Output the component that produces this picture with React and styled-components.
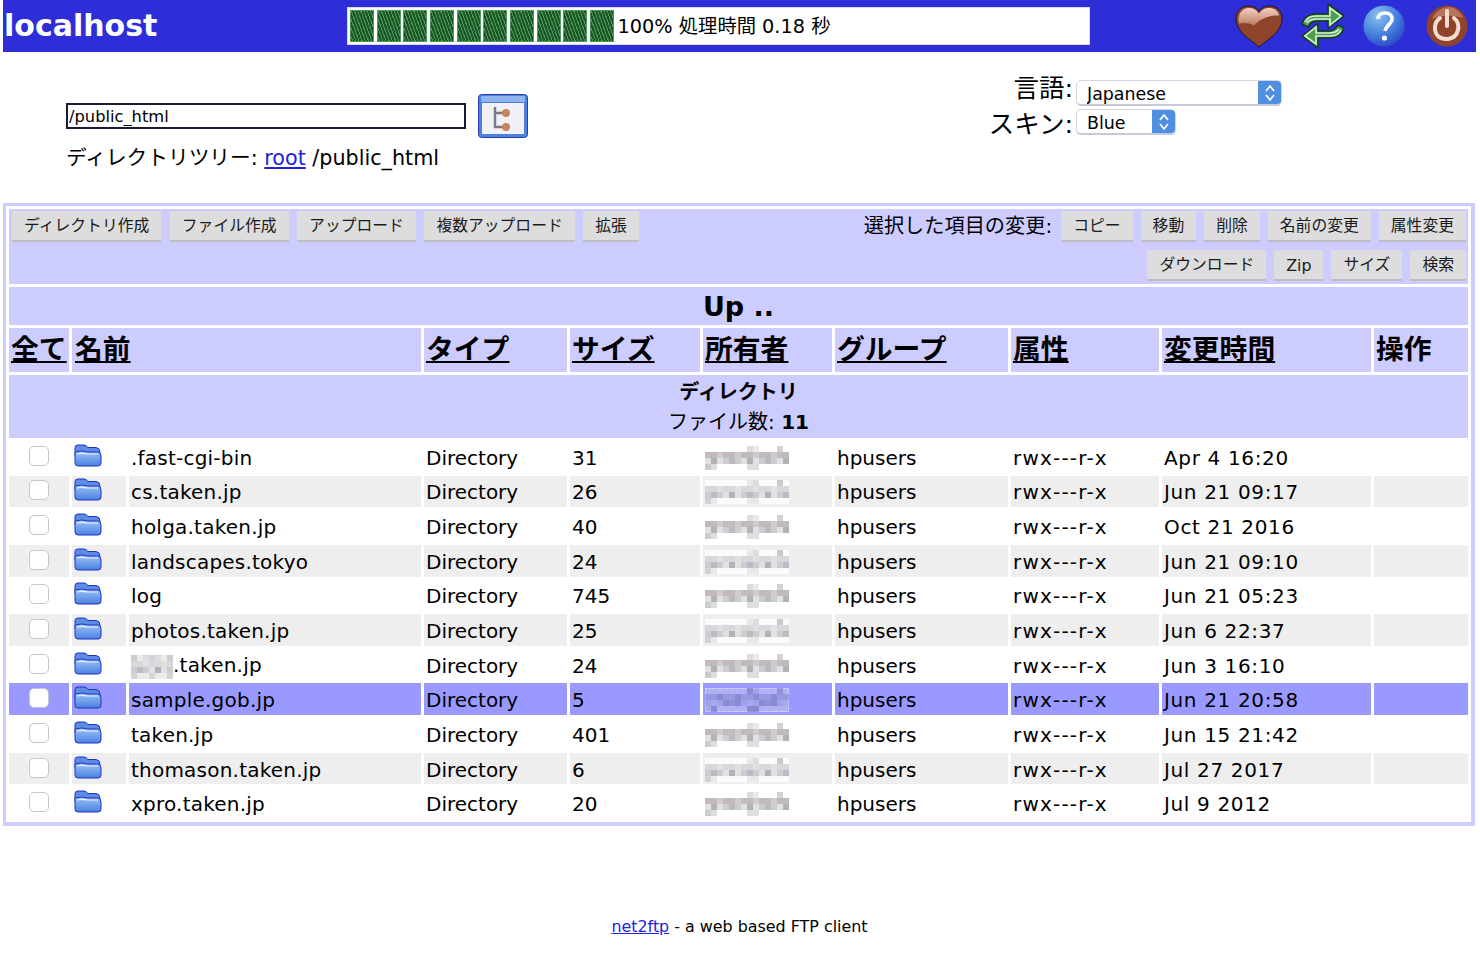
import React from "react";
import styled, { createGlobalStyle } from "styled-components";

const FONT = `"DejaVu Sans", "Noto Sans CJK JP", sans-serif`;

const GlobalStyle = createGlobalStyle`
	html, body {
		margin: 0;
		padding: 0;
		background: #ffffff;
		color: #000000;
		font-family: ${FONT};
	}
	a {
		color: #2222dd;
	}
`;

const Page = styled.div`
	width: 1480px;
	height: 954px;
	padding: 0 4px 0 3px;
	box-sizing: border-box;
	overflow: hidden;
`;

/* top bar */
const TopBar = styled.header`
	height: 52px;
	background: #2e2ed8;
	display: flex;
	align-items: center;
`;
const Title = styled.h1`
	margin: 0 0 0 1px;
	width: 343px;
	color: #ffffff;
	font-size: 30px;
	line-height: 52px;
	font-weight: bold;
`;
const Progress = styled.div`
	width: 743px;
	height: 38px;
	box-sizing: border-box;
	background: #ffffff;
	border: 1px solid #d8d8f4;
	padding: 2px;
	display: flex;
	align-items: center;
	gap: 2.67px;
	font-size: 19.3px;
`;
const Block = styled.span`
	width: 24px;
	height: 32px;
	box-sizing: border-box;
	border: 1px solid #4d9a5a;
	background: repeating-linear-gradient(70deg, #1c5428 0 1px, #4a9a58 1px 2px, #1c5428 2px 3px);
`;
const ProgressText = styled.span`
	margin-left: 1px;
	padding-bottom: 3px;
	white-space: nowrap;
`;
const TopIcons = styled.div`
	margin-left: auto;
	margin-right: 8px;
	display: flex;
	align-items: center;
	gap: 18px;
`;
const PowerSlot = styled.span`
	display: flex;
	margin-left: 3px;
`;

/* path + language */
const Controls = styled.section`
	height: 151px;
	display: flex;
	justify-content: space-between;
`;
const PathArea = styled.div`
	padding: 42px 0 0 63px;
`;
const PathRow = styled.div`
	display: flex;
	align-items: center;
	gap: 12px;
`;
const PathInput = styled.input`
	width: 400px;
	height: 26px;
	box-sizing: border-box;
	border: 2px solid #1a1a30;
	padding: 0 2px 0 1px;
	font: 16.3px ${FONT};
	color: #000000;
	background: #ffffff;
	outline: none;
`;
const TreeLine = styled.div`
	margin-top: 6px;
	font-size: 20.7px;
	line-height: 28px;
`;
const LangGrid = styled.div`
	margin: 28px 194px 0 0;
	display: grid;
	grid-template-columns: auto 206px;
	grid-auto-rows: 26px;
	column-gap: 3px;
	row-gap: 3px;
	align-items: center;
`;
const LangLabel = styled.label`
	font-size: 25.5px;
	line-height: 26px;
	text-align: right;
	margin-bottom: ${(p) => p.$lift || 0}px;
	margin-top: ${(p) => p.$drop || 0}px;
`;
const SelectBox = styled.div`
	width: ${(p) => p.$width}px;
	height: 26px;
	box-sizing: border-box;
	border: 1px solid #d4d4e4;
	border-bottom: 2px solid #c8c8dc;
	border-radius: 5px;
	background: #ffffff;
	display: flex;
	overflow: hidden;
`;
const NativeSelect = styled.select`
	appearance: none;
	flex: 1;
	min-width: 0;
	border: none;
	background: transparent;
	padding: 2px 0 0 10px;
	font: 17.4px ${FONT};
	color: #000000;
	outline: none;
`;
const SelectArrow = styled.span`
	width: 23px;
	background: #4f8fe0;
	display: flex;
	align-items: center;
	justify-content: center;
`;

/* main panel */
const Panel = styled.section`
	margin-right: 1px;
	border: 4px solid #ccccff;
	border-top-width: 3px;
	border-left-width: 3px;
`;
const Table = styled.table`
	width: 100%;
	table-layout: fixed;
	border-collapse: separate;
	border-spacing: 3px;
`;
const Cell = styled.td`
	padding: 2px 2px 0;
	box-sizing: border-box;
	height: 31.65px;
	font-size: 20px;
	line-height: 24px;
	letter-spacing: ${(p) => p.$spacing || 0}px;
	white-space: nowrap;
	background: ${(p) => (p.$selected ? "#9999ff" : p.$alt ? "#eeeeee" : "#ffffff")};
`;
const ToolbarCell = styled.td`
	height: 75px;
	padding: 2px 2px 2px 3px;
	box-sizing: border-box;
	background: #ccccff;
	vertical-align: top;
`;
const Toolbar = styled.div`
	display: flex;
	justify-content: space-between;
`;
const ButtonGroup = styled.div`
	display: flex;
	align-items: flex-start;
	gap: ${(p) => p.$gap || 8.5}px;
`;
const RightTools = styled.div`
	display: flex;
	flex-direction: column;
	align-items: flex-end;
	gap: 8px;
`;
const ToolLabel = styled.span`
	font-size: 20.2px;
	line-height: 30px;
	margin-right: 1px;
`;
const ToolButton = styled.button`
	height: 31px;
	box-sizing: border-box;
	padding: ${(p) => (p.$latin ? "2px 12px 0" : "0 12px 2px")};
	border: none;
	border-bottom: 2px solid #bdbdc4;
	background: #dddddd;
	color: #1a1a1a;
	font: 15.8px ${FONT};
	white-space: nowrap;
`;
const UpCell = styled.td`
	height: 38px;
	padding: 1px 0 0;
	box-sizing: border-box;
	background: #ccccff;
	text-align: center;
	font-size: 27px;
	font-weight: bold;
	line-height: 36px;
`;
const HeadCell = styled.th`
	height: 44px;
	padding: 0 2px;
	box-sizing: border-box;
	background: #ccccff;
	text-align: left;
	font-size: 27.8px;
	font-weight: bold;
	line-height: 36px;
	white-space: nowrap;
	text-decoration: ${(p) => (p.$plain ? "none" : "underline")};
`;
const HeadLabel = styled.span`
	margin-left: ${(p) => p.$indent || 0}px;
`;
const SectionCell = styled.td`
	height: 63px;
	padding: 0;
	background: #ccccff;
	text-align: center;
	font-size: 20px;
	line-height: 30px;
`;
const CheckBox = styled.input`
	appearance: none;
	display: block;
	width: 20px;
	height: 20px;
	margin: 0 auto 4px;
	box-sizing: border-box;
	background: #ffffff;
	border: 1.5px solid #c6c6ce;
	border-radius: 5px;
`;
const FolderWrap = styled.div`
	display: flex;
	padding: 0 0 5px 0;
`;
const MaskSlot = styled.span`
	display: inline-block;
	vertical-align: -7px;
`;
const MosaicSvg = styled.svg`
	display: block;
	flex-shrink: 0;
`;

/* footer */
const Footer = styled.footer`
	margin-top: 91px;
	text-align: center;
	font-size: 15.9px;
	line-height: 20px;
`;

const COLS = [60, 54, 292, 143, 130, 129, 173, 148, 209, 94];

const ROWS = [
	[".fast-cgi-bin", "31", "Apr 4 16:20"],
	["cs.taken.jp", "26", "Jun 21 09:17"],
	["holga.taken.jp", "40", "Oct 21 2016"],
	["landscapes.tokyo", "24", "Jun 21 09:10"],
	["log", "745", "Jun 21 05:23"],
	["photos.taken.jp", "25", "Jun 6 22:37"],
	[".taken.jp", "24", "Jun 3 16:10", true],
	["sample.gob.jp", "5", "Jun 21 20:58"],
	["taken.jp", "401", "Jun 15 21:42"],
	["thomason.taken.jp", "6", "Jul 27 2017"],
	["xpro.taken.jp", "20", "Jul 9 2012"],
];

const LEFT_BUTTONS = ["ディレクトリ作成", "ファイル作成", "アップロード", "複数アップロード", "拡張"];
const RIGHT_BUTTONS = ["コピー", "移動", "削除", "名前の変更", "属性変更"];
const RIGHT_BUTTONS_2 = ["ダウンロード", "Zip", "サイズ", "検索"];
const HEADS = [["全て", 1, false, 0], ["名前", 2, false, 1], ["タイプ", 1], ["サイズ", 1], ["所有者", 1], ["グループ", 1], ["属性", 1], ["変更時間", 1], ["操作", 1, true]];

const Heart = () => (
	<svg width="48" height="43" viewBox="0 0 50 44" preserveAspectRatio="none">
		<defs>
			<linearGradient id="heartTop" x1="0" y1="0" x2="0" y2="1">
				<stop offset="0" stopColor="#f4d0c4" />
				<stop offset="1" stopColor="#b87a60" />
			</linearGradient>
		</defs>
		<path d="M25 43 C17 36 1 28 1 14 C1 6 7 1 14 1 C19 1 23 3 25 7 C27 3 31 1 36 1 C43 1 49 6 49 14 C49 28 33 36 25 43 Z" fill="#8f432b" stroke="#1c1420" strokeWidth="1" />
		<path d="M4 19 C2 9 8 3 14 3 C19 3 23 5 25 9 C27 5 31 3 36 3 C41 3 45 6 46 11 C36 10 26 14 20 21 C14 18 9 18 4 19 Z" fill="url(#heartTop)" />
	</svg>
);

const Arrows = () => (
	<svg width="44" height="48" viewBox="0 0 44 48">
		<g fill="#4f9f52" stroke="#123a1c" strokeWidth="1.4">
			<path d="M1 22 C3 15 9 12 15 12 H27 V2 L43 14 L27 26 V19 H16 C12 19 9 21 7 25 Z" />
			<path d="M43 26 C41 33 35 36 29 36 H17 V46 L1 34 L17 22 V29 H28 C32 29 35 27 37 23 Z" />
		</g>
		<g fill="none" stroke="#d8f0d0" strokeWidth="1.6">
			<path d="M4 20 C6 16 10 14 15 14 H29 V6 L40 14 L29 23 V17 H16 C12 17 8 18 6 21" />
			<path d="M40 28 C38 32 34 34 29 34 H15 V42 L4 34 L15 25 V31 H28 C32 31 36 30 38 27" />
		</g>
	</svg>
);

const Help = () => (
	<svg width="42" height="42" viewBox="0 0 42 42">
		<defs>
			<radialGradient id="helpBall" cx="0.35" cy="0.25" r="0.85">
				<stop offset="0" stopColor="#8cc0f0" />
				<stop offset="0.5" stopColor="#4a86e0" />
				<stop offset="1" stopColor="#2740c0" />
			</radialGradient>
		</defs>
		<circle cx="21" cy="21" r="20.5" fill="url(#helpBall)" />
		<path d="M15 14 C15 10 18 8 22 8 C26 8 29 10 29 14 C29 19 23 20 22 26" fill="none" stroke="#ffffff" strokeWidth="3.6" />
		<circle cx="21.5" cy="33" r="2.6" fill="#ffffff" />
	</svg>
);

const Power = () => (
	<svg width="42" height="42" viewBox="0 0 42 42">
		<circle cx="21" cy="21" r="20.5" fill="#8f432b" />
		<path d="M6 14 C9 6 16 2 24 2 C30 3 35 7 37 13 C27 10 15 10 6 14 Z" fill="#c48a70" opacity="0.7" />
		<path d="M14 13 C8 17 7 27 13 32 C19 36 28 34 31 28 C34 22 32 16 28 13" fill="none" stroke="#f2dcd2" strokeWidth="4" strokeLinecap="round" />
		<path d="M21 6 V21" stroke="#f2dcd2" strokeWidth="4" strokeLinecap="round" />
	</svg>
);

const TreeIcon = () => (
	<svg width="50" height="44" viewBox="0 0 50 44">
		<rect x="0.5" y="0.5" width="49" height="43" rx="3" fill="#4f7fe0" stroke="#2a3cb8" />
		<rect x="3" y="2" width="44" height="6" fill="#8fb4f0" />
		<rect x="4" y="9" width="42" height="31" fill="#f0f0f6" />
		<path d="M17 13 V33 H26 M17 19 H26" fill="none" stroke="#7a7a8a" strokeWidth="2.4" />
		<circle cx="28" cy="19" r="4" fill="#c8845c" />
		<circle cx="28" cy="33" r="4" fill="#c8845c" />
	</svg>
);

const Chevrons = () => (
	<svg width="12" height="20" viewBox="0 0 12 20" fill="none" stroke="#ffffff" strokeWidth="1.7">
		<path d="M2 8 L6 3 L10 8" />
		<path d="M2 12 L6 17 L10 12" />
	</svg>
);

const Folder = () => (
	<svg width="28" height="23" viewBox="0 0 28 23">
		<defs>
			<linearGradient id="folderFill" x1="0" y1="0" x2="0" y2="1">
				<stop offset="0" stopColor="#9cc4f4" />
				<stop offset="1" stopColor="#4a80e4" />
			</linearGradient>
		</defs>
		<path d="M1 7 V3.5 Q1 1 4 1 H10 Q12 1 14 3.5 H22 Q26 4 26 8 V12 H1 Z" fill="#5c8ce6" stroke="#2032c0" />
		<path d="M1 8 Q8 6 14 8 H24 Q27 8.5 27 12 V19 Q27 22 24 22 H4 Q1 22 1 19 Z" fill="url(#folderFill)" stroke="#2032c0" />
		<path d="M3 10 Q8 8.6 14 10 H24" fill="none" stroke="#e4f0fc" strokeWidth="1.2" />
	</svg>
);

const GRAYS = ["#b4b4bc", "#c8c8cc", "#d4d4d8", "#a8a8b0", "#dedede", "#bcb4b4"];
const BUMPS_TOP = [7, 8, 12];
const BUMPS_BOTTOM = [0, 1, 7, 8];

// blurred-out owner name, made of mosaic squares
const Mosaic = ({ cols, seed, selected, alt, bumps }) => {
	const size = 6;
	const cells = [];
	for (let r = 0; r < 4; r++) {
		for (let c = 0; c < cols; c++) {
			const edge = r === 0 || r === 3;
			if (bumps && r === 0 && !BUMPS_TOP.includes(c)) continue;
			if (bumps && r === 3 && !BUMPS_BOTTOM.includes(c)) continue;
			const n = (c * c * 31 + r * 17 + c * r * 11 + seed * 3) % GRAYS.length;
			cells.push(
				<rect
					key={r + "-" + c}
					x={c * size}
					y={r * size}
					width={size}
					height={size}
					fill={selected ? "#7272c0" : GRAYS[n]}
					opacity={selected ? (n + 1) / 8 : edge ? 0.6 : 0.9}
				/>,
			);
		}
	}
	const width = cols * size;
	return (
		<MosaicSvg width={width} height={24} viewBox={`0 0 ${width} 24`}>
			{selected && <rect x="0.5" y="0.5" width={width - 1} height="23" fill="#b0b0f6" stroke="#dcdcff" strokeDasharray="2 1" />}
			{alt && !selected && <rect width={width} height="24" fill="#fbfbfb" />}
			{cells}
		</MosaicSvg>
	);
};

const Row = ({ row, index }) => {
	const [name, size, date, masked] = row;
	const alt = index % 2 === 1;
	const selected = name === "sample.gob.jp";
	const props = { $alt: alt, $selected: selected };
	return (
		<tr>
			<Cell {...props}>
				<CheckBox type="checkbox" />
			</Cell>
			<Cell {...props}>
				<FolderWrap>
					<Folder />
				</FolderWrap>
			</Cell>
			<Cell {...props} $spacing={0.22}>
				{masked && (
					<MaskSlot>
						<Mosaic cols={7} seed={3} />
					</MaskSlot>
				)}
				{name}
			</Cell>
			<Cell {...props}>Directory</Cell>
			<Cell {...props}>{size}</Cell>
			<Cell {...props}>
				<Mosaic cols={14} seed={index % 2} selected={selected} alt={alt} bumps />
			</Cell>
			<Cell {...props}>hpusers</Cell>
			<Cell {...props} $spacing={1.2}>
				rwx---r-x
			</Cell>
			<Cell {...props} $spacing={0.65}>
				{date}
			</Cell>
			<Cell {...props} />
		</tr>
	);
};

const App = () => {
	return (
		<Page>
			<GlobalStyle />
			<TopBar>
				<Title>localhost</Title>
				<Progress>
					{Array.from({ length: 10 }).map((_, i) => (
						<Block key={i} />
					))}
					<ProgressText>100% 処理時間 0.18 秒</ProgressText>
				</Progress>
				<TopIcons>
					<Heart />
					<Arrows />
					<Help />
					<PowerSlot>
						<Power />
					</PowerSlot>
				</TopIcons>
			</TopBar>

			<Controls>
				<PathArea>
					<PathRow>
						<PathInput defaultValue="/public_html" />
						<TreeIcon />
					</PathRow>
					<TreeLine>
						ディレクトリツリー: <a href="#root">root</a> /public_html
					</TreeLine>
				</PathArea>
				<LangGrid>
					<LangLabel $lift={10}>言語:</LangLabel>
					<SelectBox $width={206}>
						<NativeSelect defaultValue="Japanese">
							<option>Japanese</option>
						</NativeSelect>
						<SelectArrow>
							<Chevrons />
						</SelectArrow>
					</SelectBox>
					<LangLabel $drop={4}>スキン:</LangLabel>
					<SelectBox $width={100}>
						<NativeSelect defaultValue="Blue">
							<option>Blue</option>
						</NativeSelect>
						<SelectArrow>
							<Chevrons />
						</SelectArrow>
					</SelectBox>
				</LangGrid>
			</Controls>

			<Panel>
				<Table>
					<colgroup>
						{COLS.map((w, i) => (
							<col key={i} style={{ width: w }} />
						))}
					</colgroup>
					<tbody>
						<tr>
							<ToolbarCell colSpan={10}>
								<Toolbar>
									<ButtonGroup>
										{LEFT_BUTTONS.map((b) => (
											<ToolButton key={b}>{b}</ToolButton>
										))}
									</ButtonGroup>
									<RightTools>
										<ButtonGroup $gap={8}>
											<ToolLabel>選択した項目の変更:</ToolLabel>
											{RIGHT_BUTTONS.map((b) => (
												<ToolButton key={b}>{b}</ToolButton>
											))}
										</ButtonGroup>
										<ButtonGroup $gap={8}>
											{RIGHT_BUTTONS_2.map((b) => (
												<ToolButton key={b} $latin={b === "Zip"}>
													{b}
												</ToolButton>
											))}
										</ButtonGroup>
									</RightTools>
								</Toolbar>
							</ToolbarCell>
						</tr>
						<tr>
							<UpCell colSpan={10}>Up ..</UpCell>
						</tr>
						<tr>
							{HEADS.map(([label, span, plain, indent]) => (
								<HeadCell key={label} colSpan={span} $plain={plain}>
									<HeadLabel $indent={indent}>{label}</HeadLabel>
								</HeadCell>
							))}
						</tr>
						<tr>
							<SectionCell colSpan={10}>
								<b>ディレクトリ</b>
								<br />
								ファイル数: <b>11</b>
							</SectionCell>
						</tr>
						{ROWS.map((row, i) => (
							<Row key={row[0]} row={row} index={i} />
						))}
					</tbody>
				</Table>
			</Panel>

			<Footer>
				<a href="#net2ftp">net2ftp</a> - a web based FTP client
			</Footer>
		</Page>
	);
};

export default App;
